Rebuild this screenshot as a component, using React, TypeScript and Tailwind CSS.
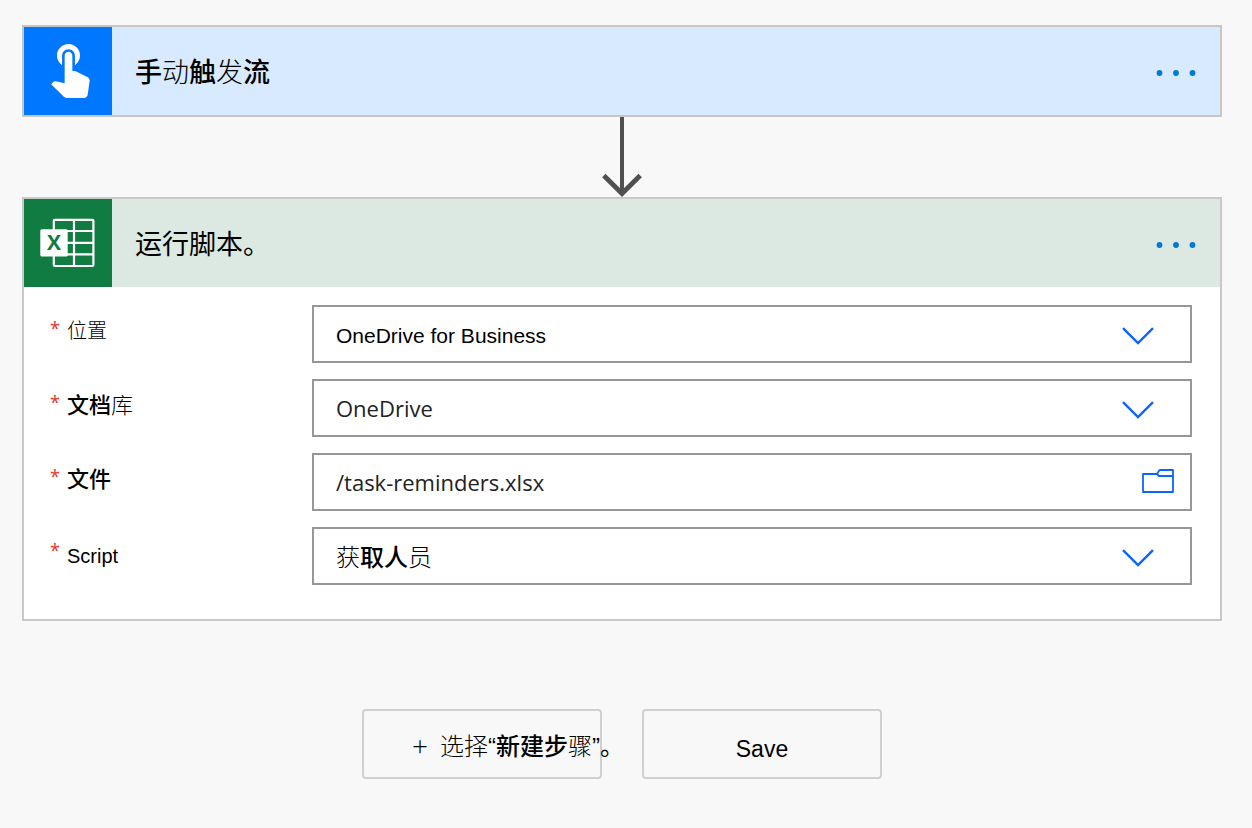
import type { ReactNode } from "react";

const Light = ({ children }: { children: ReactNode }) => <span className="font-light">{children}</span>;
const Medium = ({ children }: { children: ReactNode }) => <span className="font-medium">{children}</span>;

function TouchIcon() {
  return (
    <svg viewBox="0 3 23 21" className="h-[54px] w-[59px]" fill="#fff" aria-hidden="true">
      <path d="M9 11.24V7.5C9 6.12 10.12 5 11.5 5S14 6.12 14 7.5v3.74c1.21-.81 2-2.18 2-3.74C16 5.01 13.99 3 11.5 3S7 5.01 7 7.5c0 1.56.79 2.93 2 3.74zm9.84 4.63l-4.54-2.26c-.17-.07-.35-.11-.54-.11H13v-6c0-.83-.67-1.5-1.5-1.5S10 6.67 10 7.5v10.74l-3.43-.72c-.08-.01-.15-.03-.24-.03-.31 0-.59.13-.79.33l-.79.8 4.94 4.94c.27.27.65.44 1.06.44h6.79c.75 0 1.33-.55 1.44-1.28l.75-5.27c.01-.07.02-.14.02-.2 0-.62-.38-1.16-.91-1.38z" />
    </svg>
  );
}

function ExcelIcon() {
  return (
    <svg viewBox="0 0 88 88" className="size-[88px]" aria-hidden="true">
      <g fill="none" stroke="#fff" strokeWidth="2.2">
        <rect x="29.8" y="20.8" width="39.6" height="46.2" rx="1" />
        <path d="M50 20.8V67M29.8 32H69.4M29.8 43.8H69.4M29.8 55.3H69.4" />
      </g>
      <rect x="16.3" y="30.3" width="27.4" height="27.2" rx="1.5" fill="#fff" />
      <text x="30" y="51.3" textAnchor="middle" fill="#107c41" className="font-['Open_Sans'] text-[21px] font-bold">
        X
      </text>
    </svg>
  );
}

function Chevron() {
  return (
    <svg viewBox="0 0 32 18" className="h-[18px] w-8" fill="none" stroke="#0a64ff" strokeWidth="2.4" aria-hidden="true">
      <path d="M1 1.2 16 16 31 1.2" />
    </svg>
  );
}

function Folder() {
  return (
    <svg viewBox="0 0 32 24" className="h-6 w-8" fill="none" stroke="#0a64ff" strokeWidth="1.8" strokeLinejoin="round" aria-hidden="true">
      <path d="M1 5H15L17 1.7Q17.5 1 18.5 1H31V23H1ZM15 5 17 7H31" />
    </svg>
  );
}

function DownArrow() {
  return (
    <svg viewBox="0 0 40 80" className="mx-auto block h-20 w-10" fill="none" stroke="#505050" aria-hidden="true">
      <path d="M20 0V77" strokeWidth="4" />
      <path d="M1.8 58.5 20 76.5 38.2 58.5" strokeWidth="4.8" />
    </svg>
  );
}

function CardHeader({ icon, title, tile, bar }: { icon: ReactNode; title: ReactNode; tile: string; bar: string }) {
  return (
    <header className={`flex h-[88px] items-center ${bar}`}>
      <div className={`flex size-[88px] shrink-0 items-center justify-center ${tile}`}>{icon}</div>
      <div className="flex grow items-center pt-1 pr-6 pl-[23px]">
        <h2 className="grow text-[27px] leading-9">{title}</h2>
        <button type="button" aria-label="更多">
          <svg viewBox="0 0 40 8" className="h-2 w-10" fill="#0078d4" aria-hidden="true">
            <circle cx="3.5" cy="4" r="2.9" />
            <circle cx="20" cy="4" r="2.9" />
            <circle cx="36.5" cy="4" r="2.9" />
          </svg>
        </button>
      </div>
    </header>
  );
}

const cjkLabel = "h-[52px] text-[22px]";
const smallCjkLabel = "h-[52px] text-[20px]";
const latinLabel = "h-[58px] text-[20px]";

function Row({ id, label, labelClass, children }: { id: string; label: ReactNode; labelClass: string; children: ReactNode }) {
  return (
    <div className="grid grid-cols-[262px_1fr]">
      <label htmlFor={id} className="flex items-start">
        <span className="flex h-[46px] w-[17px] items-center font-['Noto_Sans'] text-[18px] text-[#e8392f]">*</span>
        <span className={`flex items-center ${labelClass}`}>{label}</span>
      </label>
      <div className="grid h-[58px] items-center border-2 border-[#979797] bg-white *:col-start-1 *:row-start-1">{children}</div>
    </div>
  );
}

const control = "h-full w-full appearance-none bg-transparent pl-[22px] pr-20 outline-none";
const chevronSlot = "pointer-events-none mr-9 justify-self-end pt-1";

export default function App() {
  return (
    <main className="min-h-screen bg-[#f8f8f8] pt-[25px] pr-[30px] pb-12 pl-[22px] font-['Liberation_Sans','Noto_Sans_CJK_SC',sans-serif] text-black" lang="zh-CN">
      <section className="border-2 border-[#c8c6c4]">
        <CardHeader
          icon={<TouchIcon />}
          tile="bg-[#0077ff]"
          bar="bg-[#d8eaff]"
          title={
            <>
              <Medium>手</Medium>
              <Light>动</Light>
              <Medium>触</Medium>
              <Light>发</Light>
              <Medium>流</Medium>
            </>
          }
        />
      </section>

      <DownArrow />

      <section className="border-2 border-[#c8c8c8] bg-white">
        <CardHeader icon={<ExcelIcon />} tile="bg-[#107c41]" bar="bg-[#dbe9e2]" title="运行脚本。" />
        <form className="flex flex-col gap-4 pt-[18px] pr-7 pb-[34px] pl-[26px]">
          <Row id="location" labelClass={smallCjkLabel} label={<Light>位置</Light>}>
            <select id="location" className={`${control} pt-1 text-[21px]`}>
              <option>OneDrive for Business</option>
            </select>
            <span className={chevronSlot}>
              <Chevron />
            </span>
          </Row>
          <Row
            id="library"
            labelClass={cjkLabel}
            label={
              <>
                <Medium>文档</Medium>
                <Light>库</Light>
              </>
            }
          >
            <select id="library" className={`${control} font-['Open_Sans'] text-[22px] text-[#222]`}>
              <option>OneDrive</option>
            </select>
            <span className={chevronSlot}>
              <Chevron />
            </span>
          </Row>
          <Row id="file" labelClass={cjkLabel} label={<Medium>文件</Medium>}>
            <input id="file" type="text" defaultValue="/task-reminders.xlsx" className={`${control} font-['Open_Sans'] text-[22px] text-[#222]`} />
            <button type="button" aria-label="浏览文件" className="mr-4 justify-self-end pb-0.5">
              <Folder />
            </button>
          </Row>
          <Row id="script" labelClass={latinLabel} label="Script">
            <select id="script" className={`${control} text-[24px] text-transparent`}>
              <option>获取人员</option>
            </select>
            <span className="pointer-events-none pt-1 pl-[22px] text-[24px] leading-8" aria-hidden="true">
              <Light>获</Light>
              <Medium>取人</Medium>
              <Light>员</Light>
            </span>
            <span className={chevronSlot}>
              <Chevron />
            </span>
          </Row>
        </form>
      </section>

      <div className="mt-[88px] flex justify-center gap-10">
        <button type="button" className="flex h-[70px] w-60 items-center rounded border-2 border-[#d0d0d0] pt-1.5 pl-12 text-[24px] whitespace-nowrap">
          <span className="w-7 shrink-0 pb-1 text-left font-['Open_Sans'] text-[28px] font-light">+</span>
          <span>
            <Light>选择</Light>“<Medium>新建步</Medium>
            <Light>骤</Light>”。
          </span>
        </button>
        <button type="button" className="h-[70px] w-60 rounded border-2 border-[#d0d0d0] pt-2.5 text-[23px]">
          Save
        </button>
      </div>
    </main>
  );
}
